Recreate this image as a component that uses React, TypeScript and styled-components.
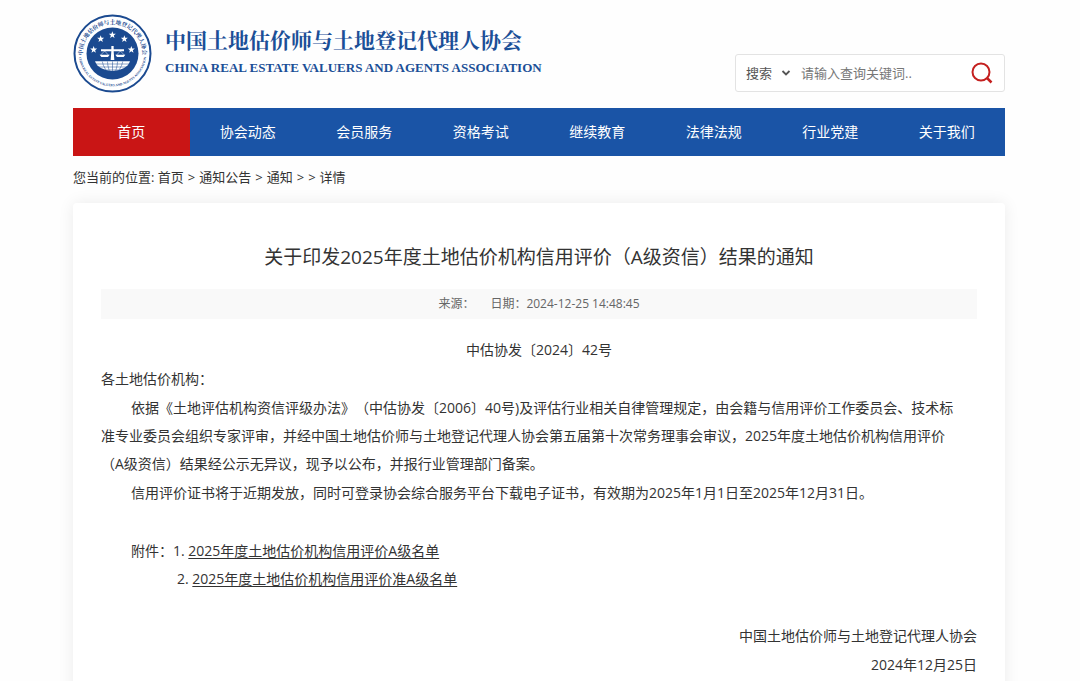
import React from "react";
import styled, { createGlobalStyle, css } from "styled-components";

const blue = "#1a54a6";
const red = "#c91515";

const GlobalStyle = createGlobalStyle`
  * { box-sizing: border-box; }
  body {
    margin: 0;
    background: #fefefe;
    color: #333;
    font-family: "Open Sans", "Noto Sans CJK SC", sans-serif;
    font-size: 14px;
    text-spacing-trim: space-all;
  }
  a { color: inherit; text-decoration: none; }
`;

const Page = styled.div`
  padding: 0 75px 0 73px;
  height: 100vh;
  min-height: 640px;
  overflow: hidden;
`;

const Header = styled.header`
  display: flex;
  justify-content: space-between;
  height: 108px;
`;

const Brand = styled.a`
  display: flex;
  gap: 13px;
  padding-top: 14px;
  color: #1b4f97;
`;

const BrandText = styled.div`
  display: flex;
  flex-direction: column;
  gap: 5px;
  padding-top: 11px;
  white-space: nowrap;
`;

const BrandName = styled.span`
  font: 700 21px/28px "Noto Serif CJK SC", "Noto Sans CJK SC", serif;
`;

const BrandLatin = styled.span`
  font: 700 13px/20px "Liberation Serif", serif;
`;

const SearchForm = styled.form`
  display: flex;
  align-items: center;
  width: 270px;
  height: 38px;
  margin-top: 54px;
  padding: 0 10px;
  border: 1px solid #e3e3e3;
  border-radius: 3px;
  background: #fff;
`;

const SelectWrap = styled.label`
  display: flex;
  align-items: center;
  gap: 8px;
  margin-right: 10px;
`;

const fieldText = css`
  border: 0;
  padding: 0;
  background: transparent;
  font: 13px/20px "Open Sans", "Noto Sans CJK SC", sans-serif;
  outline: none;
`;

const Select = styled.select`
  ${fieldText}
  appearance: none;
  color: #555;
`;

const SearchInput = styled.input`
  ${fieldText}
  flex: 1;
  min-width: 0;
  color: #333;
  &::placeholder { color: #777; opacity: 1; }
`;

const SearchButton = styled.button`
  display: flex;
  border: 0;
  padding: 0;
  background: none;
  cursor: pointer;
`;

const Nav = styled.nav`
  display: grid;
  grid-template-columns: repeat(8, 1fr);
  height: 48px;
  background: ${blue};
`;

const NavLink = styled.a<{ $active?: boolean }>`
  color: #fff;
  line-height: 47px;
  text-align: center;
  background: ${(p) => (p.$active ? red : "transparent")};
`;

const Crumbs = styled.nav`
  display: flex;
  gap: 4px;
  height: 47px;
  line-height: 42px;
  font-size: 13px;
  white-space: nowrap;
`;

const Card = styled.main`
  padding: 40px 28px 28px;
  border-radius: 4px;
  background: #fff;
  box-shadow: 0 0 16px rgba(0, 0, 0, 0.08);
`;

const Title = styled.h1`
  margin: 0;
  font-size: 19px;
  line-height: 28px;
  font-weight: 400;
  text-align: center;
`;

const Meta = styled.div`
  display: flex;
  justify-content: center;
  gap: 16px;
  margin: 18px 0 17px;
  background: #f9f9f9;
  color: #666;
  font-size: 12px;
  line-height: 30px;
`;

const Article = styled.article`
  display: flex;
  flex-direction: column;
  gap: 1px;
  line-height: 28px;
`;

const Paragraph = styled.p<{ $align?: string; $indent?: boolean }>`
  margin: 0;
  text-align: ${(p) => p.$align || "left"};
  text-indent: ${(p) => (p.$indent ? "30px" : "0")};
`;

const Attachments = styled.section`
  display: flex;
  margin: 29px 0 28px 30px;
`;

const FileList = styled.ol`
  margin: 0;
  padding: 0;
  list-style: none;
`;

const FileItem = styled.li<{ $shift?: boolean }>`
  padding-left: ${(p) => (p.$shift ? "4px" : "0")};
  a { text-decoration: underline; text-underline-offset: 2px; }
`;

const star = (cx: number, cy: number, r: number) =>
  Array.from({ length: 10 }, (_, i) => {
    const a = (Math.PI * i) / 5 - Math.PI / 2;
    const d = i % 2 ? r * 0.42 : r;
    return `${(cx + d * Math.cos(a)).toFixed(1)},${(cy + d * Math.sin(a)).toFixed(1)}`;
  }).join(" ");

const Emblem = () => (
  <svg width="79" height="79" viewBox="0 0 237 237" aria-hidden="true">
    <defs>
      <path id="ringTop" d="M 29.5 134 A 90 90 0 1 1 207.500 134" />
      <path id="ringBottom" d="M 17 125 A 102 102 0 0 0 220 125" />
      <clipPath id="bowl"><path d="M66 142 H171 A54 38 0 0 1 66 142Z" /></clipPath>
    </defs>
    <circle cx="118.500" cy="118.500" r="114" fill="#fff" stroke="#1b4a90" strokeWidth="6" />
    <circle cx="118.500" cy="118.500" r="78" fill="#1b4a90" />
    <g fill="#1b4a90" fontWeight="700">
      <text fontSize="17" fontFamily="Noto Serif CJK SC, Noto Sans CJK SC, serif" textAnchor="middle">
        <textPath href="#ringTop" startOffset="50%">中国土地估价师与土地登记代理人协会</textPath>
      </text>
      <text fontSize="10" fontFamily="Liberation Serif, serif" textAnchor="middle">
        <textPath href="#ringBottom" startOffset="50%">CHINA REAL ESTATE VALUERS AND AGENTS ASSOCIATION</textPath>
      </text>
    </g>
    <g fill="#fff">
      <polygon points={star(118, 63, 11)} />
      <polygon points={star(83, 75, 11)} />
      <polygon points={star(154, 75, 11)} />
      <polygon points={star(62, 107, 11)} />
      <polygon points={star(175, 107, 11)} />
      <path d="M115 96h7v10h31v6h-31l2 26h-11l2-26H84v-6h31z" />
      <path d="M80 122h30l-5 7H85z M127 122h30l-5 7h-20z" />
      <path d="M66 142 H171 A54 38 0 0 1 66 142Z" />
    </g>
    <path d="M95 111l-12 12M95 111l11 12M142 111l-11 12M142 111l12 12" stroke="#fff" strokeWidth="1.500" fill="none" />
    <g clipPath="url(#bowl)" stroke="#1b4a90" strokeWidth="1.500" fill="none">
      <path d="M60 150h120M60 159h120M60 168h120M118.500 140v60M103 140q2 30 14 44M134 140q-2 30-14 44M87 140q6 30 30 44M150 140q-6 30-30 44" />
    </g>
  </svg>
);

const navItems = ["首页", "协会动态", "会员服务", "资格考试", "继续教育", "法律法规", "行业党建", "关于我们"];

export default function App() {
  return (
    <>
      <GlobalStyle />
      <Page>
        <Header>
          <Brand href="#">
            <Emblem />
            <BrandText>
              <BrandName>中国土地估价师与土地登记代理人协会</BrandName>
              <BrandLatin>CHINA REAL ESTATE VALUERS AND AGENTS ASSOCIATION</BrandLatin>
            </BrandText>
          </Brand>
          <SearchForm role="search" onSubmit={(e) => e.preventDefault()}>
            <SelectWrap>
              <Select aria-label="搜索" defaultValue="all">
                <option value="all">搜索</option>
              </Select>
              <svg width="10" height="8" viewBox="0 0 10 8" fill="none" stroke="#555" strokeWidth="1.800">
                <path d="M1.500 2l3.500 3.500L8.500 2" />
              </svg>
            </SelectWrap>
            <SearchInput type="text" aria-label="关键词" placeholder="请输入查询关键词.." />
            <SearchButton type="submit" aria-label="提交">
              <svg width="24" height="24" viewBox="0 0 24 24" fill="none" stroke="#c4201f" strokeWidth="2">
                <circle cx="11" cy="11" r="8.500" />
                <path d="M17 17l4.500 4.500" strokeWidth="2.500" />
              </svg>
            </SearchButton>
          </SearchForm>
        </Header>
        <Nav>
          {navItems.map((item, i) => (
            <NavLink key={item} href="#" $active={i === 0}>{item}</NavLink>
          ))}
        </Nav>
        <Crumbs>
          <span>您当前的位置: <a href="#">首页</a></span>
          <span>&gt;</span>
          <a href="#">通知公告</a>
          <span>&gt;</span>
          <a href="#">通知</a>
          <span>&gt;</span>
          <span>&gt;</span>
          <span>详情</span>
        </Crumbs>
        <Card>
          <Title>关于印发2025年度土地估价机构信用评价（A级资信）结果的通知</Title>
          <Meta>
            <span>来源：</span>
            <span>日期：2024-12-25 14:48:45</span>
          </Meta>
          <Article>
            <Paragraph $align="center">中估协发〔2024〕42号</Paragraph>
            <Paragraph>各土地估价机构：</Paragraph>
            <Paragraph $indent>
              依据《土地评估机构资信评级办法》（中估协发〔2006〕40号)及评估行业相关自律管理规定，由会籍与信用评价工作委员会、技术标<br />
              准专业委员会组织专家评审，并经中国土地估价师与土地登记代理人协会第五届第十次常务理事会审议，2025年度土地估价机构信用评价<br />
              （A级资信）结果经公示无异议，现予以公布，并报行业管理部门备案。
            </Paragraph>
            <Paragraph $indent>
              信用评价证书将于近期发放，同时可登录协会综合服务平台下载电子证书，有效期为2025年1月1日至2025年12月31日。
            </Paragraph>
            <Attachments>
              <span>附件：</span>
              <FileList>
                <FileItem>1. <a href="#">2025年度土地估价机构信用评价A级名单</a></FileItem>
                <FileItem $shift>2. <a href="#">2025年度土地估价机构信用评价准A级名单</a></FileItem>
              </FileList>
            </Attachments>
            <Paragraph $align="right">中国土地估价师与土地登记代理人协会</Paragraph>
            <Paragraph $align="right">2024年12月25日</Paragraph>
          </Article>
        </Card>
      </Page>
    </>
  );
}
